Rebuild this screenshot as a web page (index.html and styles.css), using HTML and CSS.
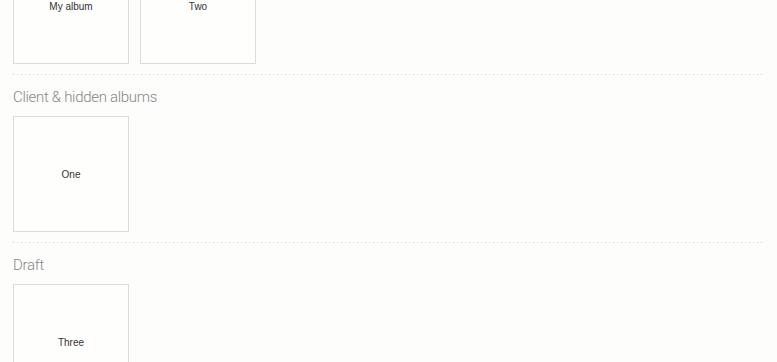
FILE: index.html
```html
<!DOCTYPE html>
<html lang="en">
<head>
<meta charset="utf-8">
<title>Albums</title>
<link rel="stylesheet" href="styles.css">
</head>
<body>
<main class="page">
  <section class="group group-first">
    <div class="albums">
      <div class="album">My album</div>
      <div class="album">Two</div>
    </div>
  </section>
  <div class="divider"></div>
  <section class="group">
    <h2 class="group-title">Client &amp; hidden albums</h2>
    <div class="albums">
      <div class="album">One</div>
    </div>
  </section>
  <div class="divider"></div>
  <section class="group">
    <h2 class="group-title">Draft</h2>
    <div class="albums">
      <div class="album">Three</div>
    </div>
  </section>
</main>
</body>
</html>
```
FILE: styles.css
```css
html, body {
  margin: 0;
  padding: 0;
  background: #fdfdfc;
}
body {
  overflow: hidden;
  height: 362px;
}
.page {
  padding: 0 13px;
  font-family: "Liberation Sans", Arial, sans-serif;
}
.group-first {
  margin-top: -52px;
}
.group-title {
  margin: 0;
  padding: 12px 0 9px;
  font-family: Roboto, "Liberation Sans", sans-serif;
  font-weight: 300;
  font-size: 15px;
  line-height: 20px;
  letter-spacing: -0.3px;
  color: #878787;
}
.albums {
  display: flex;
  gap: 11px;
}
.album {
  box-sizing: border-box;
  width: 116px;
  height: 116px;
  border: 1px solid #dcdcdc;
  background: #fefefd;
  display: flex;
  align-items: center;
  justify-content: center;
  font-size: 10px;
  color: #333;
}
.divider {
  margin-top: 10px;
  height: 1px;
  background: repeating-linear-gradient(to right, #d0d0d0 0 1px, transparent 1px 4px);
}
```
